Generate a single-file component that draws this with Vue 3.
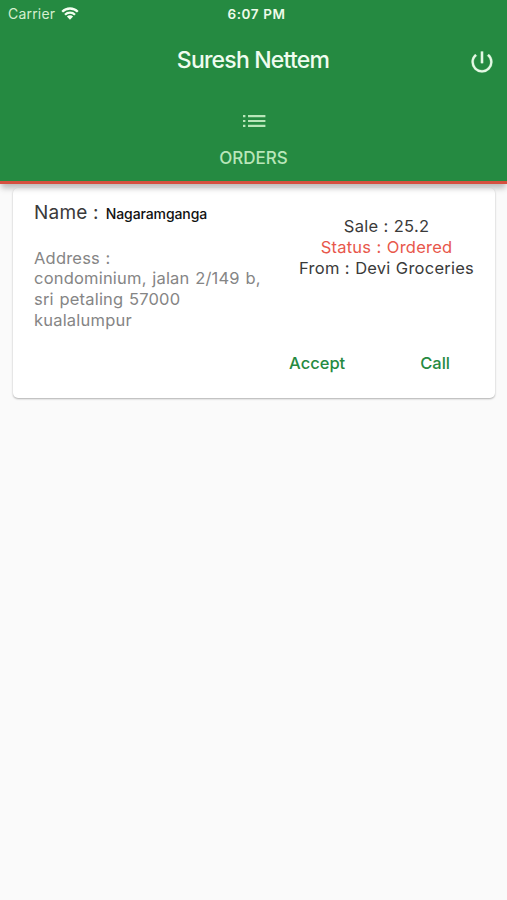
<script setup>
const order = {
  name: 'Nagaramganga',
  address: ['condominium, jalan 2/149 b,', 'sri petaling 57000', 'kualalumpur'],
  sale: '25.2',
  status: 'Ordered',
  shop: 'Devi Groceries',
}
</script>

<template>
  <div class="screen">
    <header class="header">
      <div class="status-bar">
        <div class="carrier">
          <span>Carrier</span>
          <svg class="wifi" viewBox="0 0 18 13" aria-hidden="true">
            <path d="M1.2 4.7a11.1 11.1 0 0 1 15.6 0M4 7.7a7.1 7.1 0 0 1 10 0" fill="none" stroke="currentColor" stroke-width="2.3" />
            <path d="M9 12.7 5.9 9.6a4.4 4.4 0 0 1 6.2 0z" fill="currentColor" />
          </svg>
        </div>
        <span class="time">6:07 PM</span>
        <span></span>
      </div>
      <div class="title-bar">
        <span></span>
        <h1 class="title">Suresh Nettem</h1>
        <button class="power" aria-label="Log out">
          <svg viewBox="0 0 24 24" aria-hidden="true">
            <path d="M13 3h-2v10h2V3zm4.83 2.17-1.42 1.42A6.92 6.92 0 0 1 19 12c0 3.87-3.13 7-7 7A6.995 6.995 0 0 1 7.58 6.58L6.17 5.17A8.932 8.932 0 0 0 3 12a9 9 0 0 0 18 0c0-2.74-1.23-5.18-3.17-6.83z" fill="currentColor" stroke="currentColor" stroke-width="0.2" />
          </svg>
        </button>
      </div>
      <nav class="tab">
        <svg class="list" viewBox="0 0 24 14" aria-hidden="true">
          <path d="M1 1h2.4v2.2H1zM1 5.9h2.4v2.2H1zM1 10.8h2.4v2.2H1zM6 1h17.4v2.2H6zM6 5.9h17.4v2.2H6zM6 10.8h17.4v2.2H6z" fill="currentColor" />
        </svg>
        <span class="tab-label">ORDERS</span>
      </nav>
    </header>
    <main class="content">
      <article class="card">
        <div class="details">
          <section class="customer">
            <p class="name"><span class="name-label">Name :</span><span class="name-value">{{ order.name }}</span></p>
            <div class="address">
              <p>Address :</p>
              <p v-for="line in order.address" :key="line">{{ line }}</p>
            </div>
          </section>
          <section class="summary">
            <p class="sale">Sale : {{ order.sale }}</p>
            <p class="status">Status : {{ order.status }}</p>
            <p class="shop">From : {{ order.shop }}</p>
          </section>
        </div>
        <div class="actions">
          <button class="accept">Accept</button>
          <button class="call">Call</button>
        </div>
      </article>
    </main>
  </div>
</template>

<style>
body {
  margin: 0;
  background: #fafafa;
}
</style>

<style scoped>
.screen {
  height: 900px;
  overflow: hidden;
  background: #fafafa;
  font-family: Inter, Roboto, sans-serif;
  color: #3a3a3a;
}
p, h1 { margin: 0; }
button {
  border: 0;
  padding: 0;
  background: none;
  font: inherit;
  letter-spacing: inherit;
  color: inherit;
}
.header {
  position: relative;
  z-index: 1;
  box-sizing: border-box;
  height: 184px;
  background: #258a41;
  border-bottom: 3px solid #d5503f;
  box-shadow: 0 5px 6px -1px rgba(0, 0, 0, 0.26);
}
.status-bar {
  display: grid;
  grid-template-columns: 1fr auto 1fr;
  align-items: center;
  height: 27px;
  padding: 0 2px 0 8px;
  color: #eefbe9;
}
.carrier {
  display: flex;
  align-items: center;
  gap: 6px;
  font-size: 14px;
  letter-spacing: 0.2px;
  color: #d5efcf;
}
.wifi { width: 18px; height: 13px; color: #f4fff0; }
.time { font-size: 13.5px; font-weight: 600; letter-spacing: 0.6px; }
.title-bar {
  display: grid;
  grid-template-columns: 1fr auto 1fr;
  align-items: center;
  height: 66px;
  padding: 0 11px 0 10px;
}
.title {
  font-size: 23px;
  font-weight: 500;
  letter-spacing: -0.8px;
  color: #effcef;
}
.power {
  justify-self: end;
  display: flex;
  margin-top: 4px;
  color: #e5f9e5;
}
.power svg { width: 28px; height: 28px; }
.tab {
  display: flex;
  flex-direction: column;
  align-items: center;
  padding-top: 21px;
  color: #b9e6b9;
}
.list { width: 24px; height: 14px; }
.tab-label {
  margin-top: 20px;
  font-size: 17px;
  line-height: 21px;
  font-weight: 500;
}
.content { padding: 4px 12px 0 13px; }
.card {
  box-sizing: border-box;
  height: 210px;
  background: #fff;
  border-radius: 5px;
  box-shadow: 0 1px 2px rgba(0, 0, 0, 0.3);
}
.details {
  display: flex;
  justify-content: space-between;
  height: 165px;
  padding: 13px 21px 0;
  box-sizing: border-box;
}
.name {
  display: flex;
  align-items: baseline;
  gap: 7px;
  line-height: 24px;
}
.name-label { font-size: 19px; letter-spacing: 0.2px; }
.name-value { font-size: 14px; font-weight: 500; letter-spacing: -0.1px; color: #111; }
.address {
  margin-top: 21.5px;
  font-size: 16.5px;
  line-height: 20.8px;
  letter-spacing: 0.2px;
  word-spacing: 0.8px;
  color: #858585;
  white-space: nowrap;
}
.summary {
  padding-top: 15px;
  font-size: 16.5px;
  line-height: 20.8px;
  letter-spacing: 0.24px;
  word-spacing: 0.4px;
  text-align: center;
  white-space: nowrap;
}
.status { color: #e8574b; }
.actions {
  display: flex;
  justify-content: flex-end;
  gap: 75px;
  padding-right: 45px;
  font-size: 16.5px;
  line-height: 21px;
  font-weight: 500;
  color: #268a41;
}
</style>
